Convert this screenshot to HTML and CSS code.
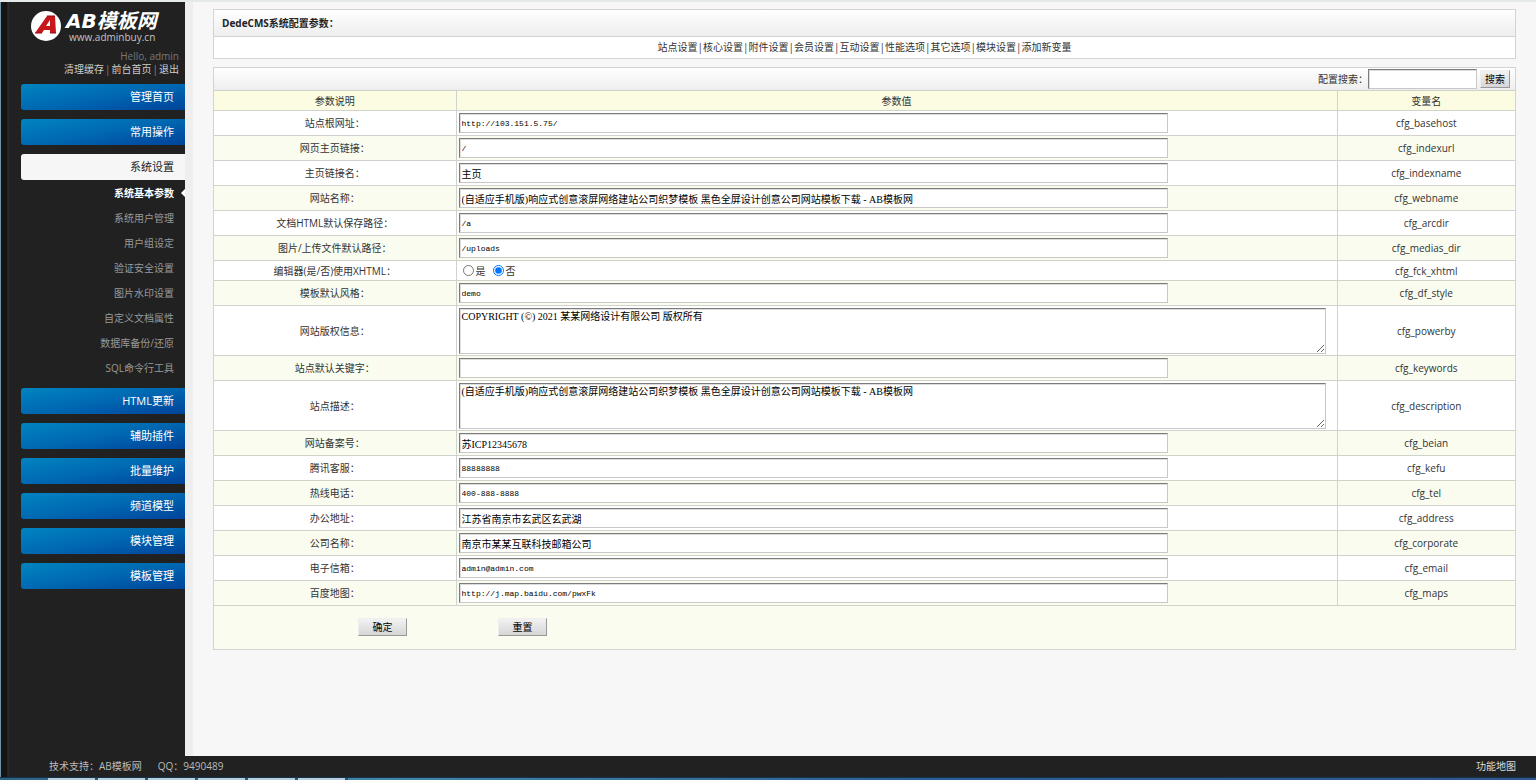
FILE: index.html
```html
<!DOCTYPE html>
<html lang="zh-CN">
<head>
    <meta charset="UTF-8">
    <meta name="viewport" content="width=device-width, initial-scale=1.0">
    <title>DedeCMS系统配置参数</title>
    <link rel="stylesheet" href="styles.css">
</head>
<body>
    <div class="frame">
        <aside class="sidebar">
            <div class="logo">
                <svg class="logo-mark" viewBox="0 0 30 30" aria-hidden="true">
                    <circle cx="15" cy="15" r="15" fill="#fff"/>
                    <path d="M4 22 16 5h8l1 17h-6l0-3h-6l-2 3zM15 15h4l0-6z" fill="#c8161d" fill-rule="evenodd"/>
                    <path d="M4 22h7M19 22h6M16 5h8" stroke="#8c0d12" stroke-width="1"/>
                </svg>
                <div class="logo-text">
                    <strong>AB模板网</strong>
                    <span>www.adminbuy.cn</span>
                </div>
            </div>
            <div class="user">
                <div>Hello, admin</div>
                <nav class="user-links"><a href="#">清理缓存</a><i>|</i><a href="#">前台首页</a><i>|</i><a href="#">退出</a></nav>
            </div>

            <nav class="menu">
                <a class="menu-item" href="#">管理首页</a>
                <a class="menu-item" href="#">常用操作</a>
                <a class="menu-item open" href="#">系统设置</a>
                <ul class="submenu">
                    <li class="current"><a href="#">系统基本参数</a></li>
                    <li><a href="#">系统用户管理</a></li>
                    <li><a href="#">用户组设定</a></li>
                    <li><a href="#">验证安全设置</a></li>
                    <li><a href="#">图片水印设置</a></li>
                    <li><a href="#">自定义文档属性</a></li>
                    <li><a href="#">数据库备份/还原</a></li>
                    <li><a href="#">SQL命令行工具</a></li>
                </ul>
                <a class="menu-item" href="#">HTML更新</a>
                <a class="menu-item" href="#">辅助插件</a>
                <a class="menu-item" href="#">批量维护</a>
                <a class="menu-item" href="#">频道模型</a>
                <a class="menu-item" href="#">模块管理</a>
                <a class="menu-item" href="#">模板管理</a>
            </nav>
        </aside>

        <main class="content">
            <section class="panel">
                <h1 class="panel-title">DedeCMS系统配置参数：</h1>
                <nav class="tabs"><a href="#">站点设置</a><i>|</i><a href="#">核心设置</a><i>|</i><a href="#">附件设置</a><i>|</i><a href="#">会员设置</a><i>|</i><a href="#">互动设置</a><i>|</i><a href="#">性能选项</a><i>|</i><a href="#">其它选项</a><i>|</i><a href="#">模块设置</a><i>|</i><a href="#">添加新变量</a></nav>
            </section>

            <section class="panel">
                <form class="search">
                    <label for="keyword">配置搜索：</label>
                    <input type="text" id="keyword">
                    <button type="button">搜索</button>
                </form>

                <form>
                    <table class="config">
                        <thead>
                            <tr>
                                <th class="col-name">参数说明</th>
                                <th>参数值</th>
                                <th class="col-var">变量名</th>
                            </tr>
                        </thead>
                        <tbody>
                            <tr>
                                <td><label for="basehost">站点根网址：</label></td>
                                <td><input class="code" type="text" id="basehost" value="http://103.151.5.75/"></td>
                                <td>cfg_basehost</td>
                            </tr>
                            <tr>
                                <td><label for="indexurl">网页主页链接：</label></td>
                                <td><input class="code" type="text" id="indexurl" value="/"></td>
                                <td>cfg_indexurl</td>
                            </tr>
                            <tr>
                                <td><label for="indexname">主页链接名：</label></td>
                                <td><input type="text" id="indexname" value="主页"></td>
                                <td>cfg_indexname</td>
                            </tr>
                            <tr>
                                <td><label for="webname">网站名称：</label></td>
                                <td><input type="text" id="webname" value="(自适应手机版)响应式创意滚屏网络建站公司织梦模板 黑色全屏设计创意公司网站模板下载 - AB模板网"></td>
                                <td>cfg_webname</td>
                            </tr>
                            <tr>
                                <td><label for="arcdir">文档HTML默认保存路径：</label></td>
                                <td><input class="code" type="text" id="arcdir" value="/a"></td>
                                <td>cfg_arcdir</td>
                            </tr>
                            <tr>
                                <td><label for="medias">图片/上传文件默认路径：</label></td>
                                <td><input class="code" type="text" id="medias" value="/uploads"></td>
                                <td>cfg_medias_dir</td>
                            </tr>
                            <tr class="radio-row">
                                <td>编辑器(是/否)使用XHTML：</td>
                                <td>
                                    <div class="radios">
                                        <label><input type="radio" name="xhtml">是</label>
                                        <label><input type="radio" name="xhtml" checked>否</label>
                                    </div>
                                </td>
                                <td>cfg_fck_xhtml</td>
                            </tr>
                            <tr>
                                <td><label for="style">模板默认风格：</label></td>
                                <td><input class="code" type="text" id="style" value="demo"></td>
                                <td>cfg_df_style</td>
                            </tr>
                            <tr class="area-row">
                                <td><label for="powerby">网站版权信息：</label></td>
                                <td><textarea id="powerby">COPYRIGHT (©) 2021 某某网络设计有限公司 版权所有</textarea></td>
                                <td>cfg_powerby</td>
                            </tr>
                            <tr>
                                <td><label for="keywords">站点默认关键字：</label></td>
                                <td><input type="text" id="keywords"></td>
                                <td>cfg_keywords</td>
                            </tr>
                            <tr class="area-row">
                                <td><label for="description">站点描述：</label></td>
                                <td><textarea id="description">(自适应手机版)响应式创意滚屏网络建站公司织梦模板 黑色全屏设计创意公司网站模板下载 - AB模板网</textarea></td>
                                <td>cfg_description</td>
                            </tr>
                            <tr>
                                <td><label for="beian">网站备案号：</label></td>
                                <td><input type="text" id="beian" value="苏ICP12345678"></td>
                                <td>cfg_beian</td>
                            </tr>
                            <tr>
                                <td><label for="kefu">腾讯客服：</label></td>
                                <td><input class="code" type="text" id="kefu" value="88888888"></td>
                                <td>cfg_kefu</td>
                            </tr>
                            <tr>
                                <td><label for="tel">热线电话：</label></td>
                                <td><input class="code" type="text" id="tel" value="400-888-8888"></td>
                                <td>cfg_tel</td>
                            </tr>
                            <tr>
                                <td><label for="address">办公地址：</label></td>
                                <td><input type="text" id="address" value="江苏省南京市玄武区玄武湖"></td>
                                <td>cfg_address</td>
                            </tr>
                            <tr>
                                <td><label for="corporate">公司名称：</label></td>
                                <td><input type="text" id="corporate" value="南京市某某互联科技邮箱公司"></td>
                                <td>cfg_corporate</td>
                            </tr>
                            <tr>
                                <td><label for="email">电子信箱：</label></td>
                                <td><input class="code" type="text" id="email" value="admin@admin.com"></td>
                                <td>cfg_email</td>
                            </tr>
                            <tr>
                                <td><label for="maps">百度地图：</label></td>
                                <td><input class="code" type="text" id="maps" value="http://j.map.baidu.com/pwxFk"></td>
                                <td>cfg_maps</td>
                            </tr>
                        </tbody>
                    </table>
                    <div class="actions">
                        <button type="button">确定</button>
                        <button type="reset">重置</button>
                    </div>
                </form>
            </section>
        </main>
    </div>

    <footer class="footer">
        <span>技术支持：AB模板网</span>
        <span>QQ：9490489</span>
        <a href="#">功能地图</a>
    </footer>
    <div class="taskbar"></div>
</body>
</html>
```

FILE: styles.css
```css
* {
    box-sizing: border-box;
}

body {
    display: flex;
    flex-direction: column;
    min-height: 100vh;
    margin: 0;
    border-top: 2px solid #e6e9ea;
    background: #212121;
    color: #333;
    font: 10px/14px "Open Sans", "Noto Sans CJK SC", sans-serif;
}

a {
    color: inherit;
    text-decoration: none;
}

i {
    font-style: normal;
}

.frame {
    display: flex;
    flex: 1;
}

/* Sidebar */
.sidebar {
    width: 185px;
    flex: none;
    padding-top: 6px;
    background: linear-gradient(to right, #6f92a5 1px, #141414 1px, #141414 7px, #323232 8px, transparent 9px);
}

.logo {
    display: flex;
    align-items: center;
    gap: 5px;
    height: 36px;
    padding-left: 31px;
    color: #fff;
}

.logo-mark {
    width: 30px;
    height: 30px;
}

.logo-text {
    white-space: nowrap;
}

.logo-text strong {
    display: block;
    font: italic bold 20px/22px "DejaVu Sans", "Noto Sans CJK SC", sans-serif;
}

.logo-text span {
    display: block;
    padding-left: 3px;
    line-height: 10px;
    color: #c4c4c4;
}

.user {
    padding: 6px 6px 0 0;
    text-align: right;
    color: #777;
    line-height: 13px;
}

.user-links {
    color: #ccc;
}

.user-links i {
    padding: 0 1px;
    color: #888;
}

.menu {
    padding: 8px 0 0 21px;
}

.menu-item {
    display: block;
    height: 26px;
    margin-bottom: 9px;
    padding-right: 11px;
    border-radius: 3px 0 0 3px;
    background: linear-gradient(170deg, #0084c0, #0068b2 50%, #00439a);
    color: #fff;
    font-size: 11px;
    line-height: 26px;
    text-align: right;
}

.menu-item.open {
    margin-bottom: 0;
    background: #f6f6f6;
    color: #222;
}

.submenu {
    margin: 0;
    padding: 1px 0 7px;
    list-style: none;
    color: #999;
    line-height: 25px;
    text-align: right;
}

.submenu li {
    padding-right: 11px;
}

.submenu .current {
    position: relative;
    color: #fff;
    font-weight: bold;
}

/* Pointer towards the open page */
.current::after {
    content: "";
    position: absolute;
    top: 8px;
    right: 0;
    border: 4px solid transparent;
    border-left-width: 0;
    border-right-color: #fff;
}

/* Content */
.content {
    flex: 1;
    padding: 7px 20px 40px 20px;
    border-left: 8px solid #eee;
    background: #f7f7f7;
}

.panel {
    margin-bottom: 8px;
    border: 1px solid #d3d3d3;
    background: #fff;
}

.panel-title {
    height: 27px;
    margin: 0;
    padding-left: 8px;
    border-bottom: 1px solid #d3d3d3;
    background: linear-gradient(#fff, #eee);
    color: #222;
    font-size: 10px;
    line-height: 26px;
}

.tabs {
    height: 21px;
    line-height: 21px;
    text-align: center;
}

.search {
    display: flex;
    align-items: center;
    justify-content: flex-end;
    height: 22px;
    padding-right: 5px;
    background: linear-gradient(#fff, #eee);
}

.search input {
    width: 109px;
    margin-right: 3px;
}

/* Form controls */
input[type="text"],
textarea {
    height: 20px;
    padding: 0 2px;
    border: 1px solid;
    border-color: #7c7c7c #c8c8c8 #c8c8c8 #7c7c7c;
    border-radius: 0;
    box-shadow: inset 1px 1px #ddd;
    background: #fff;
    color: #000;
    font: 10px/14px "Liberation Serif", "Noto Sans CJK SC", serif;
}

input.code {
    font-family: "Liberation Mono", monospace;
    font-size: 8px;
}

button {
    height: 18px;
    padding: 0 4px;
    border: 1px solid;
    border-color: #eee #999 #999 #eee;
    background: linear-gradient(#f2f2f2, #d6d6d6);
    color: #000;
    font: 10px/14px "Open Sans", "Noto Sans CJK SC", sans-serif;
}

/* Config table */
.config {
    width: 100%;
    table-layout: fixed;
    border-collapse: collapse;
}

.config th,
.config td {
    height: 25px;
    padding: 0 2px;
    border: 1px solid #d0d3cc;
    text-align: center;
}

/* The panel already draws the outer edge */
.config th:first-child,
.config td:first-child {
    border-left: 0;
}

.config th:last-child,
.config td:last-child {
    border-right: 0;
}

.config th {
    height: 20px;
    background: #fbfce2;
    font-weight: normal;
}

.config td:nth-child(2) {
    text-align: left;
}

.config tbody tr:nth-child(even) {
    background: #f9fcef;
}

.col-name {
    width: 242px;
}

.col-var {
    width: 178px;
}

.config input[type="text"] {
    display: block;
    width: 81%;
}

.config .radio-row td {
    height: 20px;
}

.config .area-row td {
    height: 50px;
}

.config textarea {
    display: block;
    width: 99%;
    height: 46px;
    padding-top: 1px;
}

.radios {
    display: flex;
    gap: 7px;
    padding-left: 4px;
}

.radios label {
    display: flex;
    align-items: center;
    gap: 2px;
}

.radios input {
    width: 11px;
    height: 11px;
    margin: 0;
}

.actions {
    display: flex;
    gap: 91px;
    padding: 12px 0 13px 144px;
    background: #f9fcef;
}

.actions button {
    width: 49px;
}

/* Footer */
.footer {
    display: flex;
    gap: 16px;
    padding: 0 20px 0 49px;
    background: linear-gradient(to right, #6f92a5 1px, #141414 1px, #141414 7px, #323232 8px, transparent 9px);
    color: #bbb;
    line-height: 21px;
}

.footer a {
    margin-left: auto;
    color: #ddd;
}

.taskbar {
    height: 3px;
    border-top: 1px solid #16324a;
    background: repeating-linear-gradient(to right, #b5cfdd 0, #b5cfdd 47px, #2f5470 47px, #2f5470 50px) 48px 0 / 300px 2px no-repeat, linear-gradient(to right, #2d6285, #4287a8 25%, #2b5f97 60%, #2f568f);
}
```
